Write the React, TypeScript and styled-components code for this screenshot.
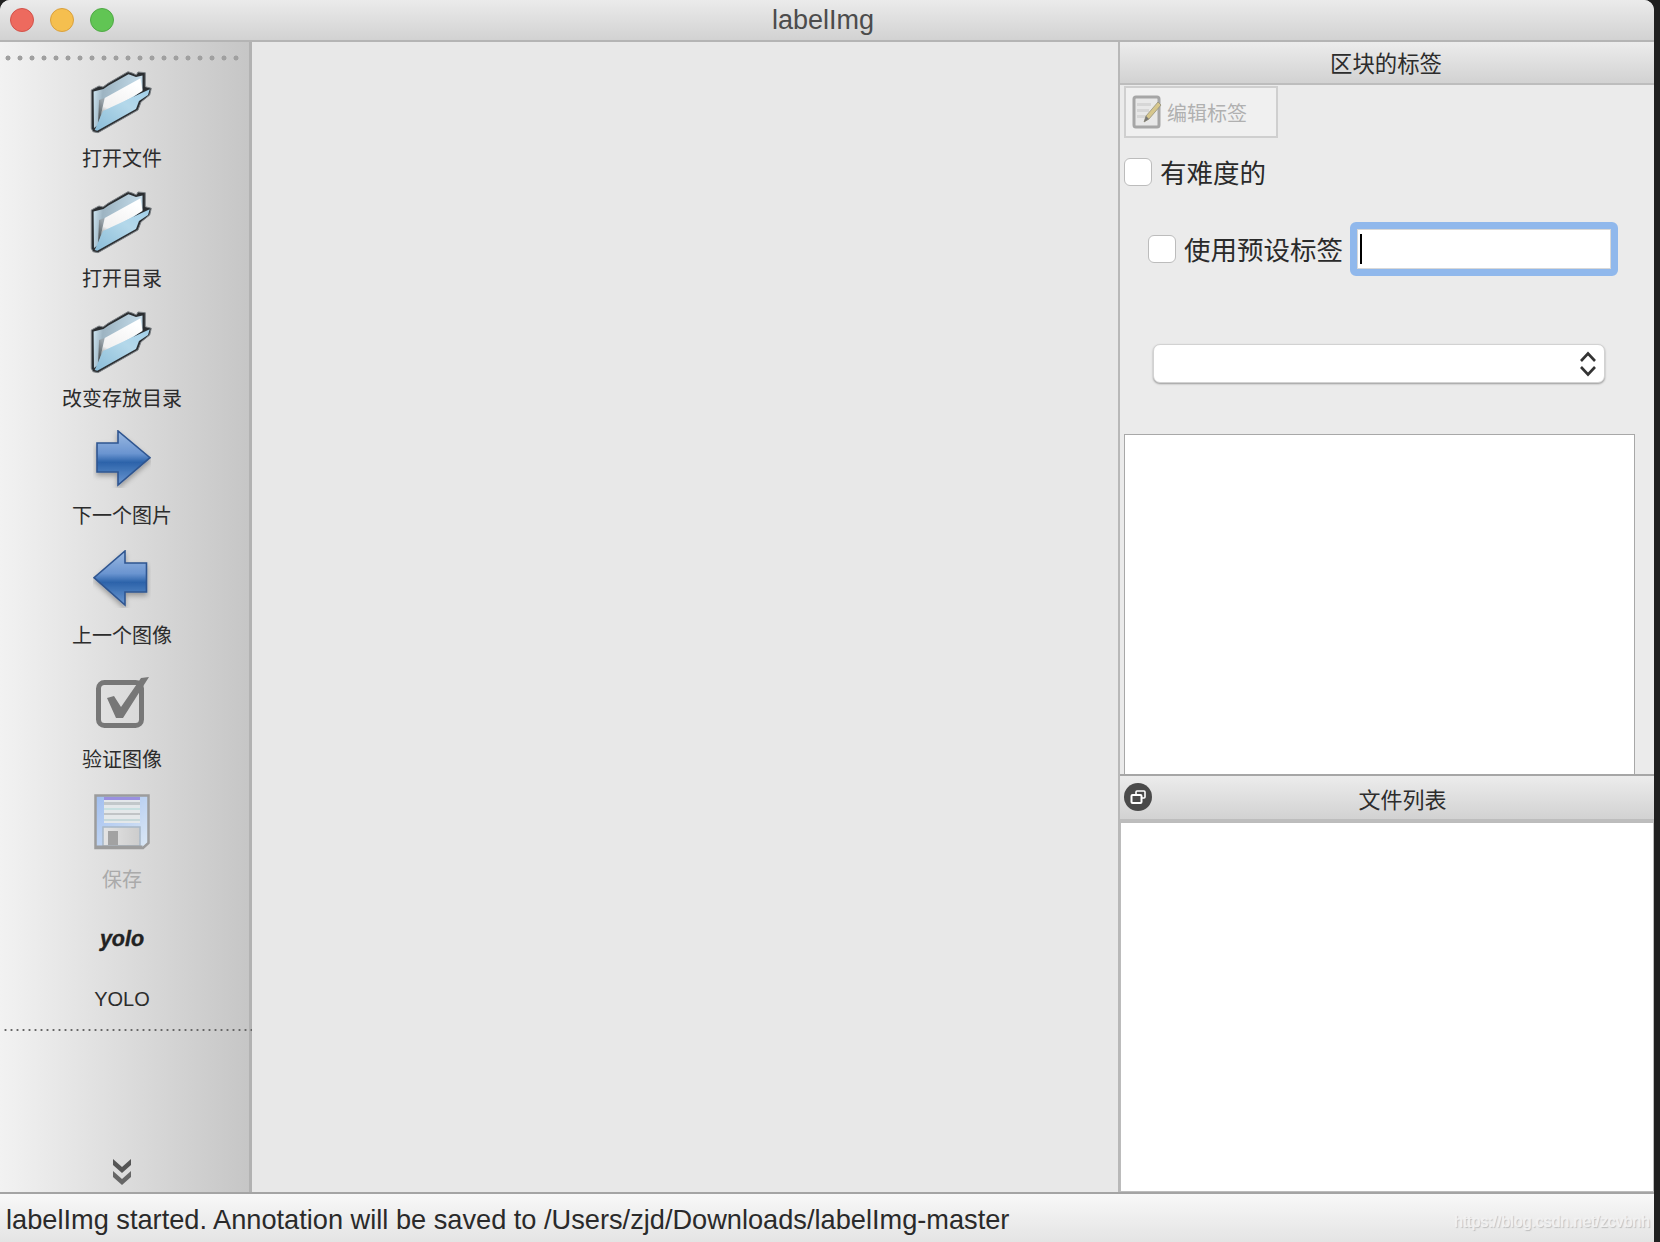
import React from 'react'
import styled, { createGlobalStyle } from 'styled-components'

const GlobalStyle = createGlobalStyle`
  html, body {
    margin: 0;
    padding: 0;
    background: #202020;
  }
  * {
    box-sizing: border-box;
  }
`

const CJK = `"Liberation Sans", "Noto Sans CJK SC", sans-serif`

const FolderIcon: React.FC<{ id: string }> = ({ id }) => (
  <svg width="64" height="64" viewBox="0 0 64 64">
    <defs>
      <linearGradient id={`${id}-back`} x1="0" y1="0" x2="1" y2="0.1">
        <stop offset="0" stopColor="#d2eaf6" />
        <stop offset="0.22" stopColor="#9db4c2" />
        <stop offset="1" stopColor="#c4dcea" />
      </linearGradient>
      <linearGradient id={`${id}-shade`} x1="0" y1="1" x2="0.3" y2="0">
        <stop offset="0" stopColor="#33373a" />
        <stop offset="1" stopColor="#9aa4aa" />
      </linearGradient>
      <linearGradient id={`${id}-paper`} x1="0" y1="1" x2="0.5" y2="0">
        <stop offset="0" stopColor="#8a9296" />
        <stop offset="0.22" stopColor="#f0f0f0" />
        <stop offset="1" stopColor="#ffffff" />
      </linearGradient>
      <linearGradient id={`${id}-front`} x1="0" y1="1" x2="1" y2="0">
        <stop offset="0" stopColor="#8abcd8" />
        <stop offset="0.6" stopColor="#b4d8ea" />
        <stop offset="1" stopColor="#a2d0ea" />
      </linearGradient>
    </defs>
    <path
      d="M1.3 20 L9 16 L13 17 L18 13.3 L38 1.7 L43 3.3 L46.3 5 L48 2 L55.3 2.7 L55.3 16.7 L61.3 18.3 L59.7 25 L51 32 L48 40 L8 62.7 L3 61.7 L1.3 58.3 Z"
      fill="#2b2e31"
      stroke="#7d8286"
      strokeWidth="1"
      strokeLinejoin="round"
    />
    <path d="M3.6 21.5 L13.5 19 L18.5 15.6 L38.5 4.2 L46 7 L52.5 5.5 L52.5 20 L8 55 L4 58 Z" fill={`url(#${id}-back)`} />
    <path d="M8 56 L11 45 L14.7 28 L9 30 Z" fill={`url(#${id}-shade)`} />
    <path d="M11 45 L14.7 28 L50.5 8.3 L52.5 21 Z" fill={`url(#${id}-paper)`} />
    <path d="M4.7 60 L13 41 L59.7 19.3 L58 25 L49 31 L46 39 L7.3 60.7 Z" fill={`url(#${id}-front)`} />
  </svg>
)

const ArrowRightIcon: React.FC = () => (
  <svg width="58" height="58" viewBox="0 0 58 58">
    <defs>
      <linearGradient id="arrow-r" x1="0" y1="0" x2="0" y2="1">
        <stop offset="0" stopColor="#9cbae2" />
        <stop offset="0.42" stopColor="#6a94d0" />
        <stop offset="0.58" stopColor="#2c63aa" />
        <stop offset="1" stopColor="#6c98d2" />
      </linearGradient>
      <filter id="arrow-shadow" x="-20%" y="-20%" width="140%" height="150%">
        <feDropShadow dx="0" dy="3" stdDeviation="2.5" floodColor="#000" floodOpacity="0.3" />
      </filter>
    </defs>
    <path
      d="M4 13 H25 V1 L57 27.7 L25 55 V42 H4 Z"
      fill="url(#arrow-r)"
      stroke="#2f5590"
      strokeWidth="1.6"
      filter="url(#arrow-shadow)"
    />
  </svg>
)

const ArrowLeftIcon: React.FC = () => (
  <svg width="58" height="58" viewBox="0 0 58 58">
    <path
      d="M53.5 13 H32 V1 L1 27.7 L32 55 V42 H53.5 Z"
      fill="url(#arrow-r)"
      stroke="#2f5590"
      strokeWidth="1.6"
      filter="url(#arrow-shadow)"
    />
  </svg>
)

const VerifyIcon: React.FC = () => (
  <svg width="56" height="56" viewBox="0 0 56 56">
    <rect x="4.5" y="8.5" width="43" height="43" rx="6" fill="none" stroke="#777" strokeWidth="5" />
    <path d="M13 24 L20 22 L27 33 L47 4 L55 3 L29 44 L22 44 Z" fill="#777" />
  </svg>
)

const SaveIcon: React.FC = () => (
  <svg width="56" height="56" viewBox="0 0 56 56">
    <defs>
      <linearGradient id="save-body" x1="0" y1="0" x2="1" y2="1">
        <stop offset="0" stopColor="#a0bef0" />
        <stop offset="1" stopColor="#dce8f4" />
      </linearGradient>
      <linearGradient id="save-slot" x1="0" y1="0" x2="1" y2="0">
        <stop offset="0" stopColor="#e4e4e4" />
        <stop offset="1" stopColor="#cccccc" />
      </linearGradient>
    </defs>
    <path d="M1.5 1.5 H54.5 V49 L49 54 H1.5 Z" fill="url(#save-body)" stroke="#9c9c9c" strokeWidth="2.5" />
    <rect x="10" y="3" width="36" height="26" fill="#e4e8ea" />
    <rect x="10" y="3" width="36" height="3" fill="#9a90e0" />
    <rect x="10" y="8" width="36" height="3" fill="#c2c8ca" />
    <rect x="10" y="14" width="36" height="2" fill="#c8e0e0" />
    <rect x="10" y="19" width="36" height="2" fill="#c0c4c6" />
    <rect x="10" y="25" width="36" height="2" fill="#c6d8da" />
    <rect x="9" y="33" width="37" height="19" fill="url(#save-slot)" stroke="#a8b8c8" strokeWidth="1.5" />
    <rect x="14" y="37" width="10" height="14" fill="#a2a2a2" />
    <rect x="1.5" y="51.5" width="47" height="2.5" fill="#9c9c9c" />
  </svg>
)

const EditIcon: React.FC = () => (
  <svg width="30" height="34" viewBox="0 0 30 34">
    <rect x="2" y="2" width="25" height="30" rx="2" fill="#e8e8e8" stroke="#a6a6a6" strokeWidth="3" />
    <rect x="5" y="8" width="14" height="3" fill="#d6d6d6" />
    <rect x="5" y="14" width="12" height="3" fill="#d6d6d6" />
    <rect x="5" y="20" width="10" height="3" fill="#d6d6d6" />
    <path d="M12 27 L14 21 L26 7 L29 10 L17 24 Z" fill="#d6c68c" stroke="#96927c" strokeWidth="0.8" />
    <path d="M12 27 L14 21 L17 24 Z" fill="#777" />
  </svg>
)

const FloatIcon: React.FC = () => (
  <svg width="28" height="28" viewBox="0 0 28 28">
    <circle cx="14" cy="14" r="14" fill="#4a4a4a" />
    <rect x="12" y="8" width="9" height="7" rx="1" fill="none" stroke="#fff" strokeWidth="1.6" />
    <rect x="7.5" y="12" width="10" height="8" rx="1" fill="#4a4a4a" stroke="#fff" strokeWidth="2" />
  </svg>
)

const ChevronsIcon: React.FC = () => (
  <svg width="20" height="28" viewBox="0 0 20 28">
    <path d="M1 1 L10 9 L19 1 V7 L10 15 L1 7 Z" fill="#555" />
    <path d="M1 13 L10 21 L19 13 V19 L10 27 L1 19 Z" fill="#666" />
  </svg>
)

const UpDownIcon: React.FC = () => (
  <svg width="16" height="26" viewBox="0 0 16 26">
    <path d="M1 10 L8 2.5 L15 10" fill="none" stroke="#333" strokeWidth="2.6" />
    <path d="M1 16 L8 23.5 L15 16" fill="none" stroke="#333" strokeWidth="2.6" />
  </svg>
)

const App: React.FC = () => {
  return (
    <Screen>
      <GlobalStyle />
      <Window>
        <TitleBar>
          <Lights>
            <Light $color="#ed6a5e" $edge="#d2524a" />
            <Light $color="#f5bf4f" $edge="#d9a03d" />
            <Light $color="#61c554" $edge="#50a946" />
          </Lights>
          <Title>labelImg</Title>
        </TitleBar>
        <Body>
          <Toolbar>
            <Grip />
            <ToolButton>
              <FolderIcon id="f1" />
              <ToolLabel>打开文件</ToolLabel>
            </ToolButton>
            <ToolButton>
              <FolderIcon id="f2" />
              <ToolLabel>打开目录</ToolLabel>
            </ToolButton>
            <ToolButton>
              <FolderIcon id="f3" />
              <ToolLabel>改变存放目录</ToolLabel>
            </ToolButton>
            <ToolButton>
              <ArrowRightIcon />
              <ToolLabel $gap={16}>下一个图片</ToolLabel>
            </ToolButton>
            <ToolButton>
              <ArrowLeftIcon />
              <ToolLabel $gap={16}>上一个图像</ToolLabel>
            </ToolButton>
            <ToolButton $top={10}>
              <VerifyIcon />
              <ToolLabel $gap={18}>验证图像</ToolLabel>
            </ToolButton>
            <ToolButton $top={10}>
              <SaveIcon />
              <ToolLabel $gap={18} $disabled>保存</ToolLabel>
            </ToolButton>
            <ToolButton $top={7}>
              <YoloMark>yolo</YoloMark>
              <ToolLabel $gap={20}>YOLO</ToolLabel>
            </ToolButton>
            <ToolbarRule />
            <MoreTools>
              <ChevronsIcon />
            </MoreTools>
          </Toolbar>
          <Canvas />
          <Dock>
            <DockHeader>区块的标签</DockHeader>
            <DockContent>
              <EditButton>
                <EditIcon />
                编辑标签
              </EditButton>
              <DifficultRow>
                <CheckBox />
                <BigLabel>有难度的</BigLabel>
              </DifficultRow>
              <PresetRow>
                <CheckBox />
                <BigLabel>使用预设标签</BigLabel>
                <FocusedInput>
                  <Caret />
                </FocusedInput>
              </PresetRow>
              <ComboBox>
                <UpDownIcon />
              </ComboBox>
              <LabelList />
            </DockContent>
            <FileHeader>
              <FloatIcon />
              <FileHeaderTitle>文件列表</FileHeaderTitle>
            </FileHeader>
            <FileList />
          </Dock>
        </Body>
        <StatusBar>
          labelImg started. Annotation will be saved to /Users/zjd/Downloads/labelImg-master
          <Watermark>https://blog.csdn.net/zcvbnh</Watermark>
        </StatusBar>
      </Window>
    </Screen>
  )
}

export default App

const Screen = styled.div`
  width: 1660px;
  height: 1242px;
  overflow: hidden;
  padding-right: 6px;
`

const Window = styled.div`
  height: 100%;
  display: flex;
  flex-direction: column;
  background: #e8e8e8;
  border-radius: 10px 10px 0 0;
  overflow: hidden;
  font-family: ${CJK};
`

const TitleBar = styled.div`
  position: relative;
  flex: 0 0 42px;
  display: flex;
  align-items: center;
  justify-content: center;
  background: linear-gradient(#ebebeb, #d2d2d2);
  border-bottom: 2px solid #b4b4b4;
`

const Lights = styled.div`
  position: absolute;
  left: 10px;
  top: 8px;
  display: flex;
  gap: 16px;
`

const Light = styled.div<{ $color: string; $edge: string }>`
  width: 24px;
  height: 24px;
  border-radius: 50%;
  background: ${({ $color }) => $color};
  border: 1px solid ${({ $edge }) => $edge};
`

const Title = styled.div`
  font-size: 27px;
  color: #4c4c4c;
  margin-left: -8px;
`

const Body = styled.div`
  flex: 1;
  min-height: 0;
  display: flex;
`

const Toolbar = styled.div`
  flex: 0 0 252px;
  min-width: 0;
  display: flex;
  flex-direction: column;
  align-items: center;
  background: linear-gradient(to right, #f2f2f2, #c6c6c6);
  border-right: 3px solid #b2b2b2;
`

const Grip = styled.div`
  flex: 0 0 12px;
  width: 240px;
  align-self: flex-start;
  margin-top: 10px;
  background: radial-gradient(circle at 6px 6px, #a0a0a0 2.2px, transparent 2.8px) 2px 0 / 12px 12px repeat-x;
`

const ToolButton = styled.div<{ $top?: number }>`
  display: flex;
  flex-direction: column;
  align-items: center;
  width: 100%;
  height: 120px;
  padding: ${({ $top }) => $top ?? 6}px 5px 0 0;
  svg {
    flex: none;
    filter: blur(0.4px);
  }
`

const ToolLabel = styled.div<{ $disabled?: boolean; $gap?: number }>`
  margin-top: ${({ $gap }) => $gap ?? 13}px;
  font-size: 20px;
  line-height: 24px;
  white-space: nowrap;
  color: ${({ $disabled }) => ($disabled ? '#aaaaaa' : '#2c2c2c')};
`

const YoloMark = styled.div`
  flex: 0 0 56px;
  display: flex;
  align-items: center;
  font-size: 21.5px;
  font-weight: 700;
  font-style: italic;
  color: #222;
  -webkit-text-stroke: 0.4px #222;
`

const ToolbarRule = styled.div`
  flex: 0 0 2px;
  width: 248px;
  align-self: flex-start;
  margin: 5px 0 0 4px;
  background: radial-gradient(circle at 1.5px 1px, #666 1px, transparent 1.2px) 0 0 / 6px 2px repeat-x;
`

const MoreTools = styled.div`
  margin: auto 5px 6px 0;
  height: 28px;
  display: flex;
`

const Canvas = styled.div`
  flex: 1;
  background: #e8e8e8;
`

const Dock = styled.div`
  flex: 0 0 536px;
  display: flex;
  flex-direction: column;
  background: #ebebeb;
  border-left: 2px solid #b8b8b8;
`

const DockHeader = styled.div`
  flex: 0 0 43px;
  display: flex;
  align-items: center;
  justify-content: center;
  padding: 0 2px 2px 0;
  font-size: 22.4px;
  color: #2c2c2c;
  background: linear-gradient(#ececec, #d2d2d2);
  border-bottom: 2px solid #bdbdbd;
`

const DockContent = styled.div`
  flex: 0 0 689px;
  display: flex;
  flex-direction: column;
  padding: 1px 18px 0 4px;
`

const EditButton = styled.div`
  width: 154px;
  height: 52px;
  display: flex;
  align-items: center;
  gap: 5px;
  padding: 0 0 0 6px;
  border: 2px solid #cfcfcf;
  background: #f0f0f0;
  color: #b0b0b0;
  font-size: 20px;
`

const DifficultRow = styled.div`
  display: flex;
  align-items: center;
  gap: 8px;
  margin-top: 20px;
  height: 28px;
`

const PresetRow = styled.div`
  display: flex;
  align-items: center;
  gap: 8px;
  margin-top: 36px;
  margin-left: 24px;
  height: 54px;
`

const CheckBox = styled.div`
  flex: 0 0 28px;
  height: 28px;
  background: #fff;
  border: 1px solid #bcbcbc;
  border-radius: 6px;
`

const BigLabel = styled.div`
  font-size: 26.5px;
  margin-top: -2px;
  color: #2a2a2a;
  white-space: nowrap;
`

const FocusedInput = styled.div`
  width: 268px;
  height: 54px;
  margin-left: -1px;
  display: flex;
  align-items: center;
  padding-left: 3px;
  background: #fff;
  border: 7px solid #90b8ec;
  border-radius: 6px;
  box-shadow: inset 0 0 0 1px #d8d8d8;
`

const Caret = styled.div`
  width: 2px;
  height: 30px;
  background: #000;
`

const ComboBox = styled.div`
  width: 452px;
  height: 39px;
  margin: 68px 0 0 29px;
  display: flex;
  align-items: center;
  justify-content: flex-end;
  padding-right: 8px;
  background: #fff;
  border: 1px solid #d2d2d2;
  border-radius: 7px;
  box-shadow: 0 1px 2px rgba(0, 0, 0, 0.35);
`

const LabelList = styled.div`
  flex: 1;
  width: 511px;
  margin-top: 51px;
  background: #fff;
  border: 1px solid #a8a8a8;
  border-bottom: none;
`

const FileHeader = styled.div`
  position: relative;
  flex: 0 0 48px;
  display: flex;
  align-items: center;
  padding-left: 4px;
  background: linear-gradient(#ececec, #d2d2d2);
  border-top: 2px solid #a6a6a6;
  border-bottom: 3px solid #bdbdbd;
  svg {
    margin-top: -2px;
  }
`

const FileHeaderTitle = styled.div`
  flex: 1;
  text-align: center;
  font-size: 22px;
  color: #2c2c2c;
  margin-right: 1px;
`

const FileList = styled.div`
  flex: 1;
  background: #fff;
  border: 1px solid #bcbcbc;
`

const StatusBar = styled.div`
  position: relative;
  flex: 0 0 50px;
  display: flex;
  align-items: center;
  padding: 3px 0 0 6px;
  font-size: 27.2px;
  color: #2a2a2a;
  white-space: nowrap;
  background: linear-gradient(#f8f8f8, #e4e4e4);
  border-top: 2px solid #a4a4a4;
`

const Watermark = styled.div`
  position: absolute;
  right: 4px;
  top: 19px;
  font-size: 15.8px;
  color: #f0f0f0;
  text-shadow: 0 0 1px rgba(255, 255, 255, 0.9), 1px 1px 1px rgba(160, 160, 160, 0.7);
`
